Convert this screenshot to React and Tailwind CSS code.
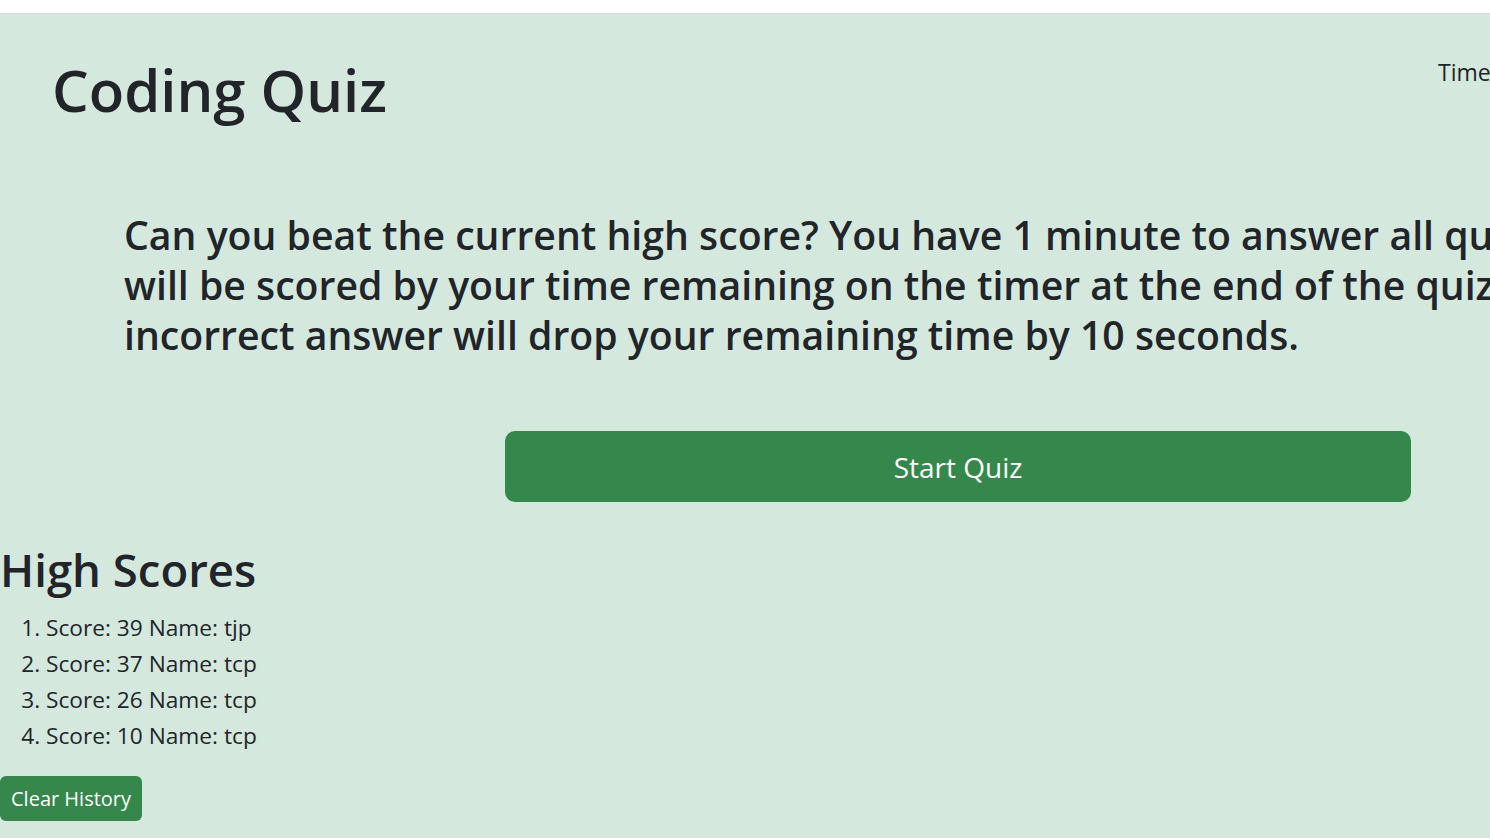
const scores = [
  { score: 39, name: "tjp" },
  { score: 37, name: "tcp" },
  { score: 26, name: "tcp" },
  { score: 10, name: "tcp" },
];

const App = () => {
  return (
    <div
      className="w-screen h-screen overflow-hidden bg-white text-[#212529]"
      style={{ fontFamily: '"Open Sans", "Liberation Sans", sans-serif' }}
    >
      <div className="h-[14px] border-b border-[#dadada] bg-white" />
      <div className="bg-[#d4e8dd] min-h-full">
        <header className="flex items-start">
          <h1 className="w-[1438px] shrink-0 pl-[52px] pt-[40px] text-[58px] leading-[72px] font-semibold">
            Coding Quiz
          </h1>
          <p className="pt-[40px] text-[23px] leading-[36px] whitespace-nowrap">
            Time: 60
          </p>
        </header>

        <h3 className="mt-[84px] pl-[124px] text-[39.2px] leading-[50px] font-semibold whitespace-nowrap">
          Can you beat the current high score? You have 1 minute to answer all
          questions. You
          <br />
          will be scored by your time remaining on the timer at the end of the
          quiz. Each
          <br />
          incorrect answer will drop your remaining time by 10 seconds.
        </h3>

        <button className="mt-[71px] ml-[505px] w-[906px] h-[71px] rounded-[10px] bg-[#35874c] text-white text-[28px]">
          Start Quiz
        </button>

        <h2 className="mt-[38px] mb-[12px] text-[45.5px] leading-[58px] font-semibold">
          High Scores
        </h2>
        <ol className="list-decimal pl-[46px] text-[22.7px] leading-[36px]">
          {scores.map((s, i) => (
            <li key={i}>
              Score: {s.score} Name: {s.name}
            </li>
          ))}
        </ol>
        <button className="mt-[22px] h-[45px] px-[11px] rounded-[6px] bg-[#35874c] text-white text-[20px]">
          Clear History
        </button>
      </div>
    </div>
  );
};

export default App;
